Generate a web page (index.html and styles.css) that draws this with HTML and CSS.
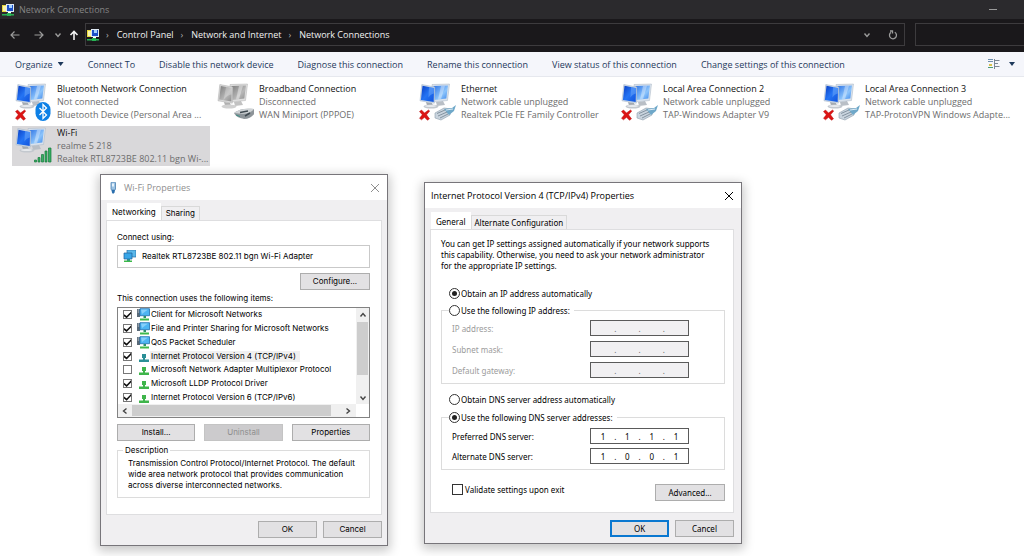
FILE: index.html
```html
<!DOCTYPE html>
<html lang="en">
<head>
<meta charset="utf-8">
<title>Network Connections</title>
<link rel="stylesheet" href="styles.css">
</head>
<body>
<svg class="defs" aria-hidden="true">
  <defs>
    <linearGradient id="scr" x1="0" y1="0" x2="1" y2="1"><stop offset="0" stop-color="#0a3fc4"/><stop offset=".5" stop-color="#2474f4"/><stop offset="1" stop-color="#1254dc"/></linearGradient>
    <linearGradient id="scr2" x1="0" y1="0" x2="1" y2="1"><stop offset="0" stop-color="#2e74e6"/><stop offset=".6" stop-color="#8cc4fb"/><stop offset="1" stop-color="#3c86ea"/></linearGradient>
    <linearGradient id="gry" x1="0" y1="0" x2="1" y2="1"><stop offset="0" stop-color="#7d7d7d"/><stop offset=".6" stop-color="#b8b8b8"/><stop offset="1" stop-color="#8d8d8d"/></linearGradient>
    <symbol id="pcs" viewBox="0 0 40 40">
      <path d="M20 20l7-1 2 4-8 1z" fill="#b9bfc6"/>
      <path d="M16 2.500l17.500-.5-2 16.500-14 1.500z" fill="#d9e2ec" stroke="#a9b5c3" stroke-width=".5"/>
      <path d="M17.500 4l14.500-.5-1.700 13-12 1.500z" fill="url(#scr2)"/>
      <path d="M25 4l4-.2-4 13.400-3 .3z" fill="#fff" opacity=".35"/>
      <path d="M10 20l6 1 1 3-6-.5z" fill="#a4aab1"/>
      <ellipse cx="15" cy="24.500" rx="7.500" ry="2" fill="#c3c8ce"/>
      <ellipse cx="14.500" cy="24" rx="5.500" ry="1" fill="#e6e9ec"/>
      <path d="M5.800 2.500l13 2.500-.5 16.200L4 18.800z" fill="#d2dce8" stroke="#9fb0c4" stroke-width=".5"/>
      <path d="M6.500 3.800l11.600 2.100-.4 14.100L4.900 17.900z" fill="url(#scr)"/>
      <path d="M13 5l5.100 .9-.2 5.600c-2 .5-4 1.500-5.500 4z" fill="#7db4fb" opacity=".45"/>
    </symbol>
    <symbol id="pcs-off" viewBox="0 0 40 40">
      <path d="M20 20l7-1 2 4-8 1z" fill="#c2c2c2"/>
      <path d="M16 2.500l17.500-.5-2 16.500-14 1.500z" fill="#dedede" stroke="#b0b0b0" stroke-width=".5"/>
      <path d="M17.500 4l14.500-.5-1.700 13-12 1.500z" fill="url(#gry)"/>
      <path d="M25 4l4-.2-4 13.400-3 .3z" fill="#fff" opacity=".4"/>
      <path d="M10 20l6 1 1 3-6-.5z" fill="#b0b0b0"/>
      <ellipse cx="15" cy="24.500" rx="7.500" ry="2" fill="#d0d0d0"/>
      <path d="M5.800 2.500l13 2.500-.5 16.200L4 18.800z" fill="#d8d8d8" stroke="#ababab" stroke-width=".5"/>
      <path d="M6.800 4l11 2.100-.4 13.500L5.200 17.600z" fill="url(#gry)"/>
      <path d="M12 5l5.800 1.100-.2 6.400c-3 .5-6 2-8 5.600z" fill="#fff" opacity=".25"/>
    </symbol>
    <symbol id="redx" viewBox="0 0 40 40">
      <path d="M3.500 29.500l2-1.500 3 3 4-3 1.200 1-3.200 3.800 3 4-2 1.500-3-3-3 2.500-2-1.500 2.800-3.500z" fill="#dc1414" stroke="#b81010" stroke-width=".5"/>
    </symbol>
    <symbol id="plug" viewBox="0 0 40 40">
      <path d="M19 31l9-5 7 1-1 6-9 5-6-2z" fill="#c9d4de" stroke="#8d9dab" stroke-width=".6"/>
      <path d="M28 27l8-1 4-3-2 6-5 4z" fill="#6fa8c9"/>
      <path d="M30 28l7-1" stroke="#dcebf5" stroke-width="1"/>
      <path d="M21 31.500l8-3.500M22 34l9-4M24 36l8-4" stroke="#71818f" stroke-width=".8"/>
    </symbol>
    <symbol id="modem" viewBox="0 0 40 40">
      <path d="M20 31c5-4 11-5 20-4l1 4c-3 4-6 6-11 6-4-1-8-2-10-6z" fill="#8d9499"/>
      <path d="M20 31c5-4 11-5 20-4-3 4-9 6-20 4z" fill="#cfd3d6"/>
      <path d="M26 30.500l8-1.500M31 34l5-3" stroke="#3f4a50" stroke-width="1.500"/>
      <path d="M22 33l4 1.500" stroke="#3f8f86" stroke-width="1"/>
    </symbol>
    <symbol id="bt" viewBox="0 0 40 40">
      <rect x="23.500" y="20" width="15" height="19" rx="7.500" fill="#0d80e6"/>
      <path d="M27.500 26l7 7-3.500 3.500v-14l3.500 3.500-7 7" fill="none" stroke="#fff" stroke-width="1.300"/>
    </symbol>
    <symbol id="bars" viewBox="0 0 40 40">
      <path d="M22.500 36v-2h2v2zM26 36v-4.500h2V36zM29.500 36v-7.500h2V36zM33 36V25h2v11zM36.500 36V22H39v14z" fill="#35b062" stroke="#177a3c" stroke-width=".7"/>
    </symbol>
    <symbol id="net" viewBox="0 0 12 12">
      <path d="M0 1h7v7H0z" fill="#e8d93c"/><path d="M1 2h3v5H1z" fill="#f8f4b0"/>
      <path d="M4 0h8v8H4z" fill="#dfeaf6"/><path d="M5 1h6v6H5z" fill="#1c50c8"/><path d="M7 1h3v3H7z" fill="#a6d2ff"/>
      <path d="M6 8h3v1H6z" fill="#fff"/><path d="M0 10h12v1.500H0zM5 9h4v3H5z" fill="#28b455"/>
    </symbol>
    <symbol id="adapter" viewBox="0 0 13 13">
      <path d="M4 0h9v7H4z" fill="#5bb8ea" stroke="#2b6fa5" stroke-width=".7"/>
      <path d="M1 3h8v6H1z" fill="#38a6e8" stroke="#1f5f9a" stroke-width=".7"/>
      <path d="M4 9h3v2H4z" fill="#2c8a9a"/><path d="M1 10.500h8V12H1z" fill="#3cb84a"/>
    </symbol>
    <symbol id="client" viewBox="0 0 13 13">
      <path d="M0 1h3v8H0z" fill="#5a6a78"/><path d="M.7 2h1.500M.7 4h1.500" stroke="#dfe6ec" stroke-width=".8"/>
      <path d="M3 .7h9.500v7H3z" fill="#4db5f2" stroke="#1f6fae" stroke-width=".8"/>
      <path d="M4 1.500h7L5 6z" fill="#9fdcff" opacity=".7"/>
      <path d="M6.500 8h2.500v2H6.500z" fill="#2d8f6a"/><path d="M3 10.500h9V12.500H3z" fill="#3fb94c"/>
    </symbol>
    <symbol id="proto" viewBox="0 0 13 13">
      <path d="M5 4h4v4H5z"/><path d="M2 9.500h10V12H2zM6 8h2v2H6z"/>
    </symbol>
    <symbol id="cross" viewBox="0 0 10 10"><path d="M1 1l8 8M9 1L1 9" fill="none" stroke="currentColor"/></symbol>
    <symbol id="chev" viewBox="0 0 8 8"><path d="M1.500 2.500L4 5.500l2.500-3" fill="none" stroke="currentColor" stroke-width="1.400"/></symbol>
  </defs>
</svg>

<header class="titlebar">
  <svg class="i12"><use href="#net"/></svg>
  <span class="titlebar-text">Network Connections</span>
  <button class="bare minimize" aria-label="Minimize"><svg class="i10" viewBox="0 0 10 10"><path d="M1 4.500h8" stroke="currentColor"/></svg></button>
</header>

<nav class="navbar" aria-label="Location">
  <div class="nav-buttons">
    <button class="bare dim" aria-label="Back"><svg class="i10" viewBox="0 0 10 10"><path d="M9.500 5H1M4.500 1.500L1 5l3.500 3.500" fill="none" stroke="currentColor" stroke-width="1.200"/></svg></button>
    <button class="bare dim" aria-label="Forward"><svg class="i10" viewBox="0 0 10 10"><path d="M.5 5H9M5.500 1.500L9 5 5.500 8.500" fill="none" stroke="currentColor" stroke-width="1.200"/></svg></button>
    <button class="bare dim recent" aria-label="Recent locations"><svg class="i8"><use href="#chev"/></svg></button>
    <button class="bare" aria-label="Up"><svg class="i10" viewBox="0 0 10 10"><path d="M5 10V1.500M1.500 5L5 1.500 8.500 5" fill="none" stroke="currentColor" stroke-width="1.600"/></svg></button>
  </div>
  <div class="address">
    <svg class="i12"><use href="#net"/></svg>
    <span class="sep">›</span><a href="#">Control Panel</a>
    <span class="sep">›</span><a href="#">Network and Internet</a>
    <span class="sep">›</span><a href="#">Network Connections</a>
    <button class="bare dim drop" aria-label="Previous locations"><svg class="i8"><use href="#chev"/></svg></button>
    <button class="bare dim" aria-label="Refresh"><svg class="i10" viewBox="0 0 10 10"><path d="M6.800 2.300A3.500 3.500 0 1 1 3 2.400M2 1h2.500v2.500" fill="none" stroke="currentColor" stroke-width="1.300"/></svg></button>
  </div>
  <input class="search" type="text" aria-label="Search">
</nav>

<div class="toolbar">
  <button class="bare">Organize <span class="caret"></span></button>
  <button class="bare">Connect To</button>
  <button class="bare">Disable this network device</button>
  <button class="bare">Diagnose this connection</button>
  <button class="bare">Rename this connection</button>
  <button class="bare">View status of this connection</button>
  <button class="bare">Change settings of this connection</button>
  <button class="bare view" aria-label="Change your view">
    <svg class="i12" viewBox="0 0 12 12"><path d="M0 1.500h5M0 3.500h5" stroke="#6f8fae"/><path d="M1 6h3v2H1z" fill="#d8c24a"/><path d="M0 9.500h5" stroke="#4d9a78"/><path d="M6.500 1v10M7 2.500h4.500M7 5.500h3M7 8.500h4.500" stroke="#7c8794"/></svg>
    <span class="caret"></span>
  </button>
</div>

<main class="connections">
  <div class="conn">
    <svg class="i40"><use href="#pcs"/><use href="#redx"/><use href="#bt"/></svg>
    <div><p class="name">Bluetooth Network Connection</p><p>Not connected</p><p>Bluetooth Device (Personal Area ...</p></div>
  </div>
  <div class="conn">
    <svg class="i40"><use href="#pcs-off"/><use href="#modem"/></svg>
    <div><p class="name">Broadband Connection</p><p>Disconnected</p><p>WAN Miniport (PPPOE)</p></div>
  </div>
  <div class="conn">
    <svg class="i40"><use href="#pcs"/><use href="#redx"/><use href="#plug"/></svg>
    <div><p class="name">Ethernet</p><p>Network cable unplugged</p><p>Realtek PCIe FE Family Controller</p></div>
  </div>
  <div class="conn">
    <svg class="i40"><use href="#pcs"/><use href="#redx"/><use href="#plug"/></svg>
    <div><p class="name">Local Area Connection 2</p><p>Network cable unplugged</p><p>TAP-Windows Adapter V9</p></div>
  </div>
  <div class="conn">
    <svg class="i40"><use href="#pcs"/><use href="#redx"/><use href="#plug"/></svg>
    <div><p class="name">Local Area Connection 3</p><p>Network cable unplugged</p><p>TAP-ProtonVPN Windows Adapte...</p></div>
  </div>
  <div class="conn selected">
    <svg class="i40"><use href="#pcs"/><use href="#bars"/></svg>
    <div><p class="name">Wi-Fi</p><p>realme 5 218</p><p>Realtek RTL8723BE 802.11 bgn Wi-...</p></div>
  </div>
</main>

<section class="dialog wifi" role="dialog" aria-labelledby="wifi-title">
  <header class="dialog-title inactive">
    <svg class="i12" viewBox="0 0 12 12"><rect x="4" y="0" width="4.500" height="8" rx="1" fill="#9dc4e4" stroke="#4a7fae" stroke-width=".8"/><path d="M5 1.500h2v3H5z" fill="#e8f3fb"/><path d="M4.500 8h3.500l-.5 2.500L6 12l-1-1.500z" fill="#2a6fae"/></svg>
    <h2 id="wifi-title">Wi-Fi Properties</h2>
    <button class="bare close" aria-label="Close"><svg class="i10"><use href="#cross"/></svg></button>
  </header>
  <div class="tabs" role="tablist">
    <button class="tab active" role="tab" aria-selected="true">Networking</button>
    <button class="tab" role="tab">Sharing</button>
  </div>
  <div class="panel">
    <label for="adapter-name">Connect using:</label>
    <div class="adapter">
      <svg class="i13"><use href="#adapter"/></svg>
      <input id="adapter-name" type="text" readonly value="Realtek RTL8723BE 802.11 bgn Wi-Fi Adapter">
    </div>
    <button class="btn configure">Configure...</button>
    <p class="items-label">This connection uses the following items:</p>
    <div class="list">
      <div class="list-main">
        <ul>
          <li><input type="checkbox" id="c1" checked><svg class="i13"><use href="#client"/></svg><label for="c1">Client for Microsoft Networks</label></li>
          <li><input type="checkbox" id="c2" checked><svg class="i13"><use href="#client"/></svg><label for="c2">File and Printer Sharing for Microsoft Networks</label></li>
          <li><input type="checkbox" id="c3" checked><svg class="i13"><use href="#client"/></svg><label for="c3">QoS Packet Scheduler</label></li>
          <li><input type="checkbox" id="c4" checked><svg class="i13 teal"><use href="#proto"/></svg><label for="c4" class="current">Internet Protocol Version 4 (TCP/IPv4)</label></li>
          <li><input type="checkbox" id="c5"><svg class="i13 green"><use href="#proto"/></svg><label for="c5">Microsoft Network Adapter Multiplexor Protocol</label></li>
          <li><input type="checkbox" id="c6" checked><svg class="i13 green"><use href="#proto"/></svg><label for="c6">Microsoft LLDP Protocol Driver</label></li>
          <li><input type="checkbox" id="c7" checked><svg class="i13 green"><use href="#proto"/></svg><label for="c7">Internet Protocol Version 6 (TCP/IPv6)</label></li>
        </ul>
        <div class="vscroll">
          <svg class="i8 up"><use href="#chev"/></svg>
          <span class="thumb"></span>
          <svg class="i8"><use href="#chev"/></svg>
        </div>
      </div>
      <div class="hscroll">
        <svg class="i8 left"><use href="#chev"/></svg>
        <span class="thumb"></span>
        <svg class="i8 right"><use href="#chev"/></svg>
      </div>
    </div>
    <div class="actions">
      <button class="btn">Install...</button>
      <button class="btn" disabled>Uninstall</button>
      <button class="btn">Properties</button>
    </div>
    <fieldset class="description">
      <legend>Description</legend>
      <p>Transmission Control Protocol/Internet Protocol. The default<br>wide area network protocol that provides communication<br>across diverse interconnected networks.</p>
    </fieldset>
  </div>
  <footer class="dialog-foot"><button class="btn">OK</button><button class="btn">Cancel</button></footer>
</section>

<section class="dialog tcp" role="dialog" aria-labelledby="tcp-title">
  <header class="dialog-title">
    <h2 id="tcp-title">Internet Protocol Version 4 (TCP/IPv4) Properties</h2>
    <button class="bare close" aria-label="Close"><svg class="i10"><use href="#cross"/></svg></button>
  </header>
  <div class="tabs" role="tablist">
    <button class="tab active" role="tab" aria-selected="true">General</button>
    <button class="tab" role="tab">Alternate Configuration</button>
  </div>
  <div class="panel">
    <p class="intro">You can get IP settings assigned automatically if your network supports<br>this capability. Otherwise, you need to ask your network administrator<br>for the appropriate IP settings.</p>
    <label class="choice"><input type="radio" name="ip" checked>Obtain an IP address automatically</label>
    <fieldset class="group ip-group">
      <legend><label class="choice"><input type="radio" name="ip">Use the following IP address:</label></legend>
      <div class="field off"><label for="ip1">IP address:</label><span class="octets"><input id="ip1" disabled>.<input aria-label="IP address, part 2" disabled>.<input aria-label="IP address, part 3" disabled>.<input aria-label="IP address, part 4" disabled></span></div>
      <div class="field off"><label for="sm1">Subnet mask:</label><span class="octets"><input id="sm1" disabled>.<input aria-label="Subnet mask, part 2" disabled>.<input aria-label="Subnet mask, part 3" disabled>.<input aria-label="Subnet mask, part 4" disabled></span></div>
      <div class="field off"><label for="gw1">Default gateway:</label><span class="octets"><input id="gw1" disabled>.<input aria-label="Default gateway, part 2" disabled>.<input aria-label="Default gateway, part 3" disabled>.<input aria-label="Default gateway, part 4" disabled></span></div>
    </fieldset>
    <label class="choice dns-auto"><input type="radio" name="dns">Obtain DNS server address automatically</label>
    <fieldset class="group">
      <legend><label class="choice"><input type="radio" name="dns" checked>Use the following DNS server addresses:</label></legend>
      <div class="field"><label for="pd1">Preferred DNS server:</label><span class="octets"><input id="pd1" value="1">.<input aria-label="Preferred DNS, part 2" value="1">.<input aria-label="Preferred DNS, part 3" value="1">.<input aria-label="Preferred DNS, part 4" value="1"></span></div>
      <div class="field"><label for="ad1">Alternate DNS server:</label><span class="octets"><input id="ad1" value="1">.<input aria-label="Alternate DNS, part 2" value="0">.<input aria-label="Alternate DNS, part 3" value="0">.<input aria-label="Alternate DNS, part 4" value="1"></span></div>
    </fieldset>
    <div class="validate">
      <label class="choice"><input type="checkbox">Validate settings upon exit</label>
      <button class="btn">Advanced...</button>
    </div>
  </div>
  <footer class="dialog-foot"><button class="btn default">OK</button><button class="btn">Cancel</button></footer>
</section>
</body>
</html>
```
FILE: styles.css
```css
* { box-sizing: border-box; }
body {
  margin: 0;
  min-height: 100vh;
  background: #fff;
  color: #111;
  font: 9px/13px "Open Sans", "Noto Sans", sans-serif;
  overflow: hidden;
}
p, h2, ul { margin: 0; padding: 0; font: inherit; }
ul { list-style: none; }
a { color: inherit; text-decoration: none; }
button, input { font: inherit; color: inherit; }
svg { display: block; flex: none; }
.defs { position: absolute; width: 0; height: 0; }
.i8 { width: 8px; height: 8px; }
.i10 { width: 10px; height: 10px; }
.i12 { width: 12px; height: 12px; }
.i13 { width: 13px; height: 13px; }
.i40 { width: 40px; height: 40px; overflow: visible; }
.bare {
  display: inline-flex;
  align-items: center;
  padding: 0;
  border: 0;
  background: none;
  white-space: nowrap;
}

/* Explorer window */
.titlebar {
  display: flex;
  align-items: center;
  gap: 5px;
  height: 19px;
  padding: 0 26px 0 2px;
  background: #2b2a2d;
  color: #858585;
}
.minimize { margin-left: auto; color: #9a9a9a; }
.navbar {
  display: flex;
  align-items: center;
  gap: 10px;
  height: 33px;
  padding: 4px 0 6px 10px;
  background: #1a181b;
  color: #f2f2f2;
}
.nav-buttons { display: flex; align-items: center; gap: 14px; width: 65px; }
.dim { color: #9b9b9b; }
.recent { margin: 0 -7px 0 -4px; }
.address {
  display: flex;
  flex: 1;
  align-items: center;
  height: 23px;
  padding: 0 6px 0 1px;
  border: 1px solid #3d3b3e;
}
.sep { padding: 0 8px 0 7px; color: #b0b0b0; }
.drop { margin: 0 17px 0 auto; }
.search {
  width: 109px;
  height: 23px;
  border: 1px solid #3d3b3e;
  border-right: 0;
  background: none;
}
.toolbar {
  display: flex;
  align-items: center;
  gap: 24px;
  height: 25px;
  padding: 0 9px 0 15px;
  border-bottom: 1px solid #e6e8ee;
  background: #f5f6fb;
  color: #1e395b;
}
.caret {
  width: 6px;
  height: 4px;
  margin-left: 5px;
  background: #1e395b;
  clip-path: polygon(0 0, 100% 0, 50% 100%);
}
.view { gap: 4px; margin-left: auto; }
.connections {
  display: grid;
  grid-template-columns: repeat(auto-fill, 198px);
  gap: 4px;
  padding: 5px 0 0 12px;
}
.conn {
  display: flex;
  gap: 5px;
  height: 40px;
  color: #6d6d6d;
  white-space: nowrap;
}
.conn .name { color: #111; }
.selected { background: #d9d8da; }

/* Dialog windows */
.dialog {
  position: absolute;
  display: flex;
  flex-direction: column;
  padding: 0 5px 7px;
  border: 1px solid #77757a;
  background: #f0eff1;
  box-shadow: 0 3px 10px 2px rgba(0, 0, 0, .22);
  color: #000;
}
.dialog-title {
  display: flex;
  align-items: center;
  gap: 5px;
  height: 25px;
  margin: 0 -5px;
  padding: 0 7px 0 6px;
  background: #fff;
  font: 9px/13px "Open Sans", "Noto Sans", sans-serif;
}
.inactive { color: #8f8f8f; }
.close { margin-left: auto; }
.tabs { display: flex; align-items: flex-end; padding-left: 1px; }
.tab {
  height: 14px;
  padding: 0 3px;
  border: 1px solid #d9d9d9;
  border-bottom: 0;
  background: #f0eff1;
}
.tab.active { height: 17px; background: #fff; border-color: #fff; }
.panel {
  display: flex;
  flex-direction: column;
  border: 1px solid #dedee0;
  background: #fff;
}
.panel p { white-space: nowrap; }
.btn {
  min-width: 59px;
  height: 17px;
  padding: 0 4px;
  border: 1px solid #adadad;
  background: #e2e1e3;
}
.btn:disabled { background: #cccbcd; border-color: #c4c4c4; color: #8f8f8f; }
.btn.default { border: 2px solid #0a78d0; }
.dialog-foot { display: flex; justify-content: flex-end; gap: 6px; padding-top: 6px; }
fieldset { min-width: 0; margin: 0; padding: 0; border: 1px solid #dcdcdc; }

input[type="checkbox"], input[type="radio"] {
  appearance: none;
  flex: none;
  display: grid;
  place-items: center;
  width: 11px;
  height: 11px;
  margin: 0;
  border: 1px solid #333;
  background: #fff;
}
input[type="radio"] { border-radius: 50%; }
input[type="radio"]:checked::before {
  content: "";
  width: 5px;
  height: 5px;
  border-radius: 50%;
  background: #222;
}
input[type="checkbox"]:checked::before {
  content: "";
  width: 7px;
  height: 7px;
  background: #111;
  clip-path: polygon(0 40%, 38% 68%, 100% 5%, 100% 35%, 38% 100%, 0 70%);
}

/* Wi-Fi Properties */
.wifi {
  top: 174px;
  left: 100px;
  width: 288px;
  font: 8px/11px Inter, "Liberation Sans", sans-serif;
}
.wifi .tabs { height: 20px; }
.wifi .tab { padding: 0 4px; }
.wifi .panel { padding: 11px 11px 16px 10px; }
.adapter {
  display: flex;
  align-items: center;
  gap: 6px;
  height: 23px;
  margin-top: 2px;
  padding: 0 5px;
  border: 1px solid #c9c9c9;
}
.adapter input { flex: 1; padding: 0; border: 0; background: none; }
.configure { align-self: flex-end; width: 70px; margin-top: 5px; }
.items-label { margin: 3px 0; }
.list { border: 1px solid #828282; }
.list-main { display: flex; height: 96px; }
.list ul { display: flex; flex: 1; flex-direction: column; min-width: 0; }
.list li { display: flex; flex: 1; align-items: center; padding-left: 5px; white-space: nowrap; }
.list input[type="checkbox"] { width: 9px; height: 9px; margin-right: 5px; border-color: #777; }
.list label { padding: 0 4px 0 1px; }
.list .current { background: #f0f0f0; }
.teal { fill: #2a8f96; }
.green { fill: #3fb54b; }
.vscroll, .hscroll { display: flex; align-items: center; background: #f0f0f0; color: #444; }
.vscroll { flex-direction: column; width: 13px; padding: 3px 0 2px; }
.vscroll .thumb { width: 11px; height: 53px; margin: 3px 0 auto; background: #cdcdcd; }
.hscroll { height: 13px; margin-right: 13px; padding: 0 4px 0 3px; }
.hscroll .thumb { flex: 1; height: 11px; margin: 0 13px 0 3px; background: #cdcdcd; }
.up { transform: rotate(180deg); }
.left { transform: rotate(90deg); }
.right { transform: rotate(-90deg); }
.actions { display: grid; grid-template-columns: repeat(3, 1fr); gap: 9px; margin-top: 6px; }
.description { margin-top: 4px; padding: 2px 10px 6px; }
.description legend { margin-left: -5px; padding: 0 2px; }

/* TCP/IPv4 Properties */
.tcp {
  top: 182px;
  left: 424px;
  width: 318px;
  padding: 0 7px 6px 5px;
  font: 8px/11px "Noto Sans", "Open Sans", sans-serif;
}
.tcp .dialog-title { margin-right: -7px; }
.tcp .tabs { height: 21px; }
.tcp .tab.active { padding: 0 4px; }
.tcp .panel { padding: 8px 8px 11px 10px; }
.tcp .dialog-foot { padding-top: 7px; }
.intro { margin-bottom: 15px; }
.choice { display: flex; align-items: center; gap: 1px; height: 14px; }
.panel > .choice { margin-left: 8px; }
.group { display: flex; flex-direction: column; padding: 3px 35px 5px 10px; }
.ip-group { gap: 5px; margin-top: 3px; }
.group:not(.ip-group) { gap: 4px; padding-top: 4px; }
.group legend { margin-left: -3px; padding: 0 4px 0 0; }
.dns-auto { margin-top: 8px; }
.dns-auto + .group { margin-top: 4px; }
.field { display: flex; align-items: center; justify-content: space-between; }
.off { color: #9c9c9c; }
.octets {
  display: flex;
  align-items: center;
  width: 99px;
  height: 16px;
  padding: 0 1px;
  border: 1px solid #5a5a5a;
  background: #fff;
}
.off .octets { background: #f1f0f2; color: #666; }
.octets input {
  flex: 1;
  min-width: 0;
  padding: 0;
  border: 0;
  background: none;
  text-align: center;
}
.validate { display: flex; align-items: flex-start; justify-content: space-between; margin-top: 14px; padding-left: 11px; }
.validate .choice { gap: 2px; margin-top: -2px; }
.validate .btn { width: 70px; }
```
